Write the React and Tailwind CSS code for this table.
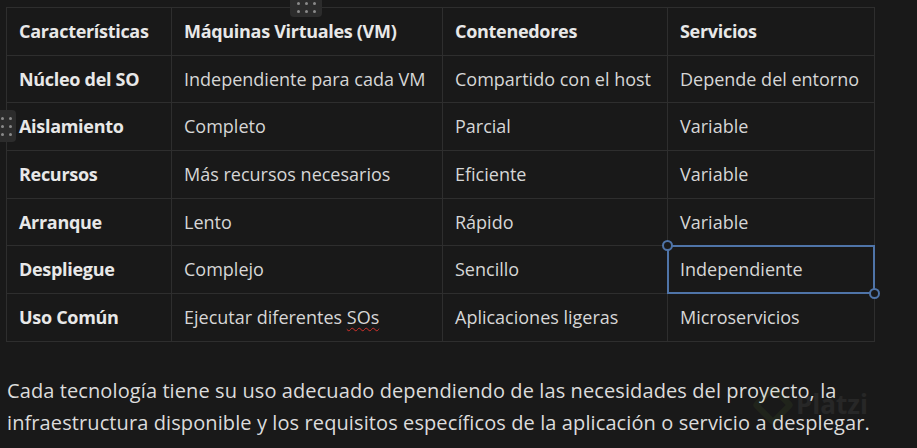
import React from 'react';

const COLS = ['Características', 'Máquinas Virtuales (VM)', 'Contenedores', 'Servicios'];
const WIDTHS = ['w-[165px]', 'w-[271px]', 'w-[225px]', 'w-[207px]'];

const ROWS = [
    ['Núcleo del SO', 'Independiente para cada VM', 'Compartido con el host', 'Depende del entorno'],
    ['Aislamiento', 'Completo', 'Parcial', 'Variable'],
    ['Recursos', 'Más recursos necesarios', 'Eficiente', 'Variable'],
    ['Arranque', 'Lento', 'Rápido', 'Variable'],
    ['Despliegue', 'Complejo', 'Sencillo', 'Independiente'],
    ['Uso Común', 'Ejecutar diferentes SOs', 'Aplicaciones ligeras', 'Microservicios'],
];

function Dots({ cols, rows }) {
    const n = cols * rows;
    return (
        <div className={`grid gap-[5px] ${cols === 3 ? 'grid-cols-3' : 'grid-cols-2'}`}>
            {Array.from({ length: n }).map((_, i) => (
                <span key={i} className="w-[3px] h-[3px] rounded-full bg-[#8a8a8a]" />
            ))}
        </div>
    );
}

function Cell({ text, bold, selected, col }) {
    const isSOs = text === 'Ejecutar diferentes SOs';
    return (
        <td className={`relative h-[47.7px] px-3 border border-[#2e2e2e] align-middle whitespace-nowrap ${WIDTHS[col]} ${bold ? 'font-bold text-[#e8e8e8] tracking-[-0.3px]' : 'text-[#d6d6d6]'}`}>
            {isSOs ? (
                <span>Ejecutar diferentes <span className="underline decoration-wavy decoration-[#d0302a] underline-offset-[3px] decoration-1">SOs</span></span>
            ) : text}
            {selected && (
                <>
                    <div className="absolute -inset-px border-2 border-[#4f74a8] pointer-events-none" />
                    <div className="absolute -left-[6px] -top-[6px] w-[11px] h-[11px] rounded-full border-2 border-[#4f74a8] bg-[#191919]" />
                    <div className="absolute -right-[6px] -bottom-[6px] w-[11px] h-[11px] rounded-full border-2 border-[#4f74a8] bg-[#191919]" />
                </>
            )}
        </td>
    );
}

export default function App() {
    return (
        <div className="relative w-[917px] h-[448px] overflow-hidden bg-[#191919] text-[18px] font-['Segoe_UI','Open_Sans',sans-serif]">
            {/* drag handle above table */}
            <div className="absolute left-[290px] -top-[3px] w-[32px] h-[20px] rounded-[4px] bg-[#2c2c2c] flex items-center justify-center">
                <Dots cols={3} rows={2} />
            </div>
            {/* drag handle left of row */}
            <div className="absolute -left-[4px] top-[110px] w-[20px] h-[32px] rounded-[4px] bg-[#2c2c2c] flex items-center justify-center">
                <Dots cols={2} rows={3} />
            </div>

            <div className="pl-[6px] pt-[7px]">
                <table className="border-collapse table-fixed w-[868px]">
                    <thead>
                        <tr>
                            {COLS.map((c, i) => <Cell key={c} text={c} bold col={i} />)}
                        </tr>
                    </thead>
                    <tbody>
                        {ROWS.map((r, ri) => (
                            <tr key={ri}>
                                {r.map((c, ci) => (
                                    <Cell key={ci} text={c} bold={ci === 0} col={ci} selected={ri === 4 && ci === 3} />
                                ))}
                            </tr>
                        ))}
                    </tbody>
                </table>
            </div>

            <p className="mt-[33px] pl-[7px] pr-[8px] text-[20px] leading-[32px] tracking-[0.1px] text-[#dcdcdc]">
                Cada tecnología tiene su uso adecuado dependiendo de las necesidades del proyecto, la infraestructura disponible y los requisitos específicos de la aplicación o servicio a desplegar.
            </p>

            {/* faint watermark */}
            <div className="absolute left-[758px] top-[385px] flex items-center gap-2 opacity-[0.06] pointer-events-none">
                <div className="w-[30px] h-[30px] rotate-45 border-[6px] border-[#98ca3f] rounded-[4px]" />
                <span className="text-[26px] font-bold text-white">Platzi</span>
            </div>
        </div>
    );
}
